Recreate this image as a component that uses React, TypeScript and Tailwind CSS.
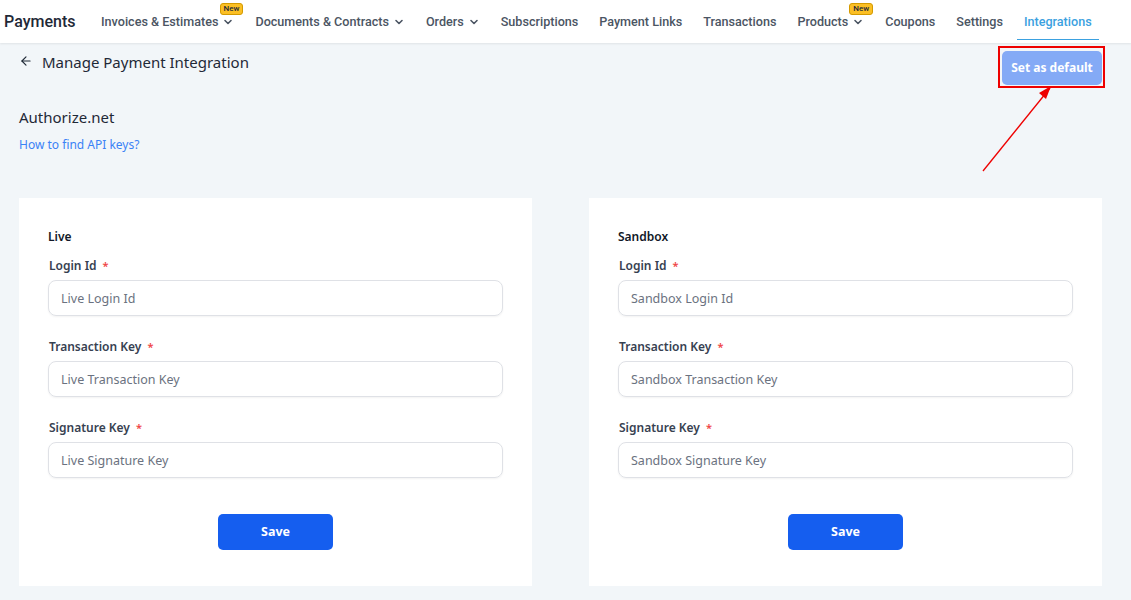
import { ArrowLeft, ChevronDown } from "lucide-react";

const navItems = [
    { label: "Invoices & Estimates", dropdown: true, badge: true },
    { label: "Documents & Contracts", dropdown: true },
    { label: "Orders", dropdown: true },
    { label: "Subscriptions" },
    { label: "Payment Links" },
    { label: "Transactions" },
    { label: "Products", dropdown: true, badge: true },
    { label: "Coupons" },
    { label: "Settings" },
    { label: "Integrations", active: true },
];

const fields = ["Login Id", "Transaction Key", "Signature Key"];

function Card({ title }: { title: string }) {
    return (
        <div className="bg-white flex-1 pt-[31px] pb-[36px] px-[29px]">
            <p className="text-[12px] font-semibold text-[#111827] leading-4 mb-[13px]">{title}</p>
            <div className="flex flex-col gap-[23px]">
                {fields.map((f) => (
                    <div key={f} className="flex flex-col gap-[6px]">
                        <label className="pl-[1px] text-[12px] font-semibold text-[#374151] leading-4">
                            {f}
                            <span className="text-[#ef4444] ml-[6px] text-[11px]">*</span>
                        </label>
                        <input
                            placeholder={`${title} ${f}`}
                            className="h-[36px] w-full rounded-lg border border-[#dfe1e6] shadow-[0_1px_2px_rgba(0,0,0,0.05)] px-[12px] text-[12.5px] text-[#374151] placeholder:text-[#6b7280] outline-none"
                        />
                    </div>
                ))}
            </div>
            <div className="flex justify-center mt-[36px]">
                <button className="w-[115px] h-[36px] rounded-[5px] bg-[#155eef] text-white text-[12.5px] font-bold">
                    Save
                </button>
            </div>
        </div>
    );
}

export default function App() {
    return (
        <div className="min-h-[600px] bg-[#f2f6f9] font-['Noto_Sans',sans-serif]">
            {/* Top nav */}
            <header className="h-[43px] bg-white flex items-center shadow-[0_1px_2px_rgba(0,0,0,0.08)] font-['Roboto',sans-serif] relative z-10">
                <h1 className="pl-[4px] text-[16px] font-medium text-[#1f2937] w-[94px]">Payments</h1>
                <nav className="flex h-full gap-[7px]">
                    {navItems.map((item) => (
                        <div key={item.label} className="relative h-full flex items-center px-[7px] pt-[2px]">
                            <span
                                className={`text-[12.6px] font-medium ${item.active ? "text-[#3ba1e0]" : "text-[#4b5563]"}`}
                            >
                                {item.label}
                            </span>
                            {item.dropdown && (
                                <ChevronDown size={12} strokeWidth={3.2} className="ml-[4px] text-[#4b5563] mt-[-2px]" />
                            )}
                            {item.badge && (
                                <span className="absolute top-[3px] right-[-2px] h-[12px] px-[3px] flex items-center rounded-[3px] bg-[#fbbf24] border border-[#d49a00] text-[8px] leading-none font-medium text-[#1f2937]">
                                    New
                                </span>
                            )}
                            {item.active && (
                                <span className="absolute bottom-[3px] left-0 right-0 h-[1px] bg-[#3ba1e0]" />
                            )}
                        </div>
                    ))}
                </nav>
            </header>

            <main className="pl-[19px] pr-[29px]">
                <div className="flex items-start justify-between pt-[8px]">
                    <div className="flex items-center gap-[9px]">
                        <ArrowLeft size={14} strokeWidth={2} className="text-[#1f2937] mt-[-2px]" />
                        <span className="text-[15px] text-[#1f2937]">Manage Payment Integration</span>
                    </div>
                    <div className="relative">
                        <button className="w-[100px] h-[34px] rounded-[5px] bg-[#84aaf6] text-white text-[12px] font-bold">
                            Set as default
                        </button>
                        {/* annotation */}
                        <div className="absolute -left-[4px] -right-[3px] -top-[5px] -bottom-[3px] border-2 border-[#ee0000] pointer-events-none" />
                        <svg className="absolute left-[-22px] top-[33px] overflow-visible" width="80" height="90">
                            <line x1="3" y1="87" x2="70" y2="4" stroke="#ee0000" strokeWidth="1.3" />
                            <polygon points="71,2 59,9 66,15" fill="#ee0000" />
                        </svg>
                    </div>
                </div>

                <div className="mt-[20px]">
                    <p className="text-[15px] text-[#1f2937] leading-6">Authorize.net</p>
                    <a className="block mt-[7px] text-[12px] text-[#3b82f6]">How to find API keys?</a>
                </div>

                <div className="flex gap-[57px] mt-[44px]">
                    <Card title="Live" />
                    <Card title="Sandbox" />
                </div>
            </main>
        </div>
    );
}
